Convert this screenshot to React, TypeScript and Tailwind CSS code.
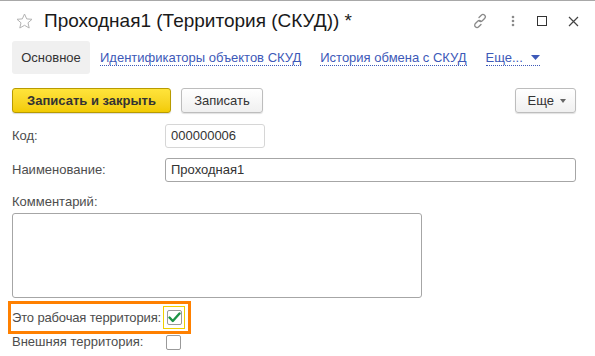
import React from 'react';

const font = { fontFamily: '"Liberation Sans", Arial, sans-serif' };

function Star() {
  return (
    <svg width="17" height="16" viewBox="0 0 17 16" fill="none" stroke="#b3b3b3" strokeWidth="1">
      <path d="M8.5 1 L10.7 5.9 L16 6.3 L12 9.8 L13.2 15 L8.5 12.3 L3.8 15 L5 9.8 L1 6.3 L6.3 5.9 Z" strokeLinejoin="round" />
    </svg>
  );
}

function WindowIcons() {
  return (
    <div className="flex items-center">
      <svg width="16" height="16" viewBox="0 0 16 16" fill="none" stroke="#8a8a8a" strokeWidth="1.3" strokeLinecap="round">
        <path d="M7 4.5 L9.3 2.2 a2.3 2.3 0 0 1 3.3 3.3 L10.3 7.8 a2.3 2.3 0 0 1 -3.2 0" />
        <path d="M9 11.5 L6.7 13.8 a2.3 2.3 0 0 1 -3.3 -3.3 L5.7 8.2 a2.3 2.3 0 0 1 3.2 0" />
      </svg>
      <svg className="ml-[23px]" width="4" height="14" viewBox="0 0 4 14" fill="#8a8a8a">
        <circle cx="2" cy="3" r="1.3" />
        <circle cx="2" cy="7" r="1.3" />
        <circle cx="2" cy="11" r="1.3" />
      </svg>
      <div className="ml-[22px] w-[10px] h-[10px] border-[1.5px] border-[#333]" />
      <svg className="ml-[21px]" width="11" height="11" viewBox="0 0 11 11" stroke="#444" strokeWidth="1.2">
        <path d="M1 1 L10 10 M10 1 L1 10" />
      </svg>
    </div>
  );
}

function TabLink({ children, arrow }: { children: React.ReactNode; arrow?: boolean }) {
  return (
    <div className="pl-[10px] pr-[9px] flex items-center">
      <span className="text-[#3d59b8] border-b border-dotted border-[#3d59b8] leading-[15px] flex items-center">
        {children}
        {arrow && (
          <svg className="ml-[8px]" width="9" height="5" viewBox="0 0 9 5" fill="#3d59b8">
            <path d="M0 0 H9 L4.5 5 Z" />
          </svg>
        )}
      </span>
    </div>
  );
}

function Checkbox({ checked }: { checked?: boolean }) {
  return (
    <div className="w-[15px] h-[15px] border border-[#9a9a9a] rounded-[2px] bg-white flex items-center justify-center">
      {checked && (
        <svg width="13" height="11" viewBox="0 0 13 11" fill="none" stroke="#1e9447" strokeWidth="2.4" strokeLinecap="round" strokeLinejoin="round">
          <path d="M1.5 5.5 L4.8 9 L11.5 1.5" />
        </svg>
      )}
    </div>
  );
}

export default function App() {
  return (
    <div className="w-[595px] h-[356px] bg-white border-t border-[#a8a8a8] overflow-hidden text-[13px] text-[#4d4d4d] whitespace-nowrap" style={font}>
      {/* title */}
      <div className="h-[40px] flex items-center pl-[16px] pr-[16px]">
        <Star />
        <h1 className="ml-[11px] text-[19px] text-[#1a1a1a] font-normal">Проходная1 (Территория (СКУД)) *</h1>
        <div className="ml-auto">
          <WindowIcons />
        </div>
      </div>

      {/* tabs */}
      <div className="flex h-[33px] pl-[12px]">
        <div className="bg-[#f0f0f0] rounded-[3px] w-[78px] flex items-center justify-center text-[#333]">Основное</div>
        <TabLink>Идентификаторы объектов СКУД</TabLink>
        <TabLink>История обмена с СКУД</TabLink>
        <TabLink arrow>Еще...</TabLink>
      </div>

      {/* command bar */}
      <div className="flex mt-[14px] pl-[12px] pr-[19px] h-[25px]">
        <button className="w-[159px] h-[25px] rounded-[3px] border border-[#b89b00] bg-gradient-to-b from-[#ffe43a] to-[#f2cb00] font-bold text-[#333] text-[13px] shadow-[0_1px_1px_rgba(0,0,0,0.15)]">
          Записать и закрыть
        </button>
        <button className="ml-[10px] w-[82px] h-[25px] rounded-[3px] border border-[#bdbdbd] bg-gradient-to-b from-white to-[#f0f0f0] text-[#333] text-[13px] shadow-[0_1px_1px_rgba(0,0,0,0.12)]">
          Записать
        </button>
        <button className="ml-auto w-[61px] h-[25px] rounded-[3px] border border-[#bdbdbd] bg-gradient-to-b from-white to-[#f0f0f0] text-[#333] text-[13px] shadow-[0_1px_1px_rgba(0,0,0,0.12)] flex items-center justify-end pr-[9px]">
          Еще
          <svg className="ml-[6px]" width="6" height="4" viewBox="0 0 6 4" fill="#666">
            <path d="M0 0 H6 L3 4 Z" />
          </svg>
        </button>
      </div>

      {/* Код */}
      <div className="flex items-center mt-[11px] pl-[12px] h-[24px]">
        <div className="w-[153px]">Код:</div>
        <div className="w-[100px] h-[24px] border border-[#d6d6d6] rounded-[3px] px-[5px] flex items-center text-[#333]">000000006</div>
      </div>

      {/* Наименование */}
      <div className="flex items-center mt-[10px] pl-[12px] pr-[19px] h-[24px]">
        <div className="w-[153px]">Наименование:</div>
        <div className="flex-1 h-[24px] border border-[#a6a6a6] rounded-[3px] px-[5px] flex items-center text-[#333]">Проходная1</div>
      </div>

      {/* Комментарий */}
      <div className="mt-[12px] pl-[12px] leading-[15px]">Комментарий:</div>
      <div className="ml-[12px] mt-[4px] w-[410px] h-[85px] border border-[#a6a6a6] rounded-[3px]" />

      {/* Это рабочая территория */}
      <div className="ml-[8px] mt-[3px] w-[183px] h-[33px] border-[3px] border-[#ff8000] flex items-center pl-[1px]">
        <div className="w-[151px] shrink-0 tracking-[-0.15px]">Это рабочая территория:</div>
        <div className="w-[22px] h-[23px] shrink-0 border border-[#f0d000] flex items-center justify-center">
          <Checkbox checked />
        </div>
      </div>

      {/* Внешняя территория */}
      <div className="flex items-center pl-[12px] h-[16px] mt-[0px]">
        <div className="w-[154px]">Внешняя территория:</div>
        <Checkbox />
      </div>
    </div>
  );
}
